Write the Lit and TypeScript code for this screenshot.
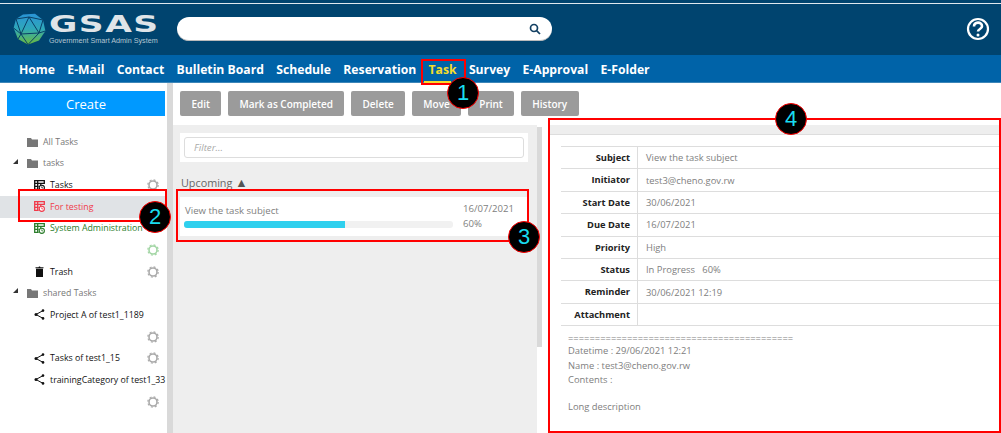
import { LitElement, html, css, svg } from 'lit';
import { customElement } from 'lit/decorators.js';

const NAV = ['Home', 'E-Mail', 'Contact', 'Bulletin Board', 'Schedule', 'Reservation', 'Task', 'Survey', 'E-Approval', 'E-Folder'];
const ACTIONS = ['Edit', 'Mark as Completed', 'Delete', 'Move', 'Print', 'History'];
const DETAILS = [
  ['Subject', 'View the task subject'],
  ['Initiator', 'test3@cheno.gov.rw'],
  ['Start Date', '30/06/2021'],
  ['Due Date', '16/07/2021'],
  ['Priority', 'High'],
  ['Status', 'In Progress \u00a0 60%'],
  ['Reminder', '30/06/2021 12:19'],
  ['Attachment', ''],
];

type Row = { kind: string; label?: string; icon?: string; tone?: string; caret?: boolean; gear?: boolean };

const TREE: Row[] = [
  { kind: 'folder', label: 'All Tasks' },
  { kind: 'folder', label: 'tasks', caret: true },
  { kind: 'leaf', icon: 'table', label: 'Tasks', gear: true },
  { kind: 'leaf', icon: 'table', label: 'For testing', tone: 'red' },
  { kind: 'leaf', icon: 'table', label: 'System Administration', tone: 'green' },
  { kind: 'gear', tone: 'green' },
  { kind: 'leaf', icon: 'trash', label: 'Trash', gear: true },
  { kind: 'folder', label: 'shared Tasks', caret: true },
  { kind: 'leaf', icon: 'share', label: 'Project A of test1_1189' },
  { kind: 'gear' },
  { kind: 'leaf', icon: 'share', label: 'Tasks of test1_15', gear: true },
  { kind: 'leaf', icon: 'share', label: 'trainingCategory of test1_33' },
  { kind: 'gear' },
];

const folderIcon = svg`<svg class="ico-folder" viewBox="0 0 11 10"><path fill="#777" d="M0 1h4l1 1.4h6V10H0z"/></svg>`;
const tableIcon = svg`<svg class="ico" viewBox="0 0 11 11" fill="none" stroke="currentColor"><path stroke-width="1.3" d="M5.5.7H.7v8.6h4M.7 3.4h9.6V.7H5M.7 6.3h4M3.7 1v8"/><path stroke-width="1.3" d="M6.8 3.4v1.5"/><circle cx="7.8" cy="7.8" r="2.6" fill="#fff" stroke-width="1.1"/><path stroke-width=".8" d="M7.8 6.4v1.5h1.2"/></svg>`;
const trashIcon = svg`<svg class="ico" viewBox="0 0 11 11"><path fill="#111" d="M1.5 1.2h3l.5-.8h1l.5.8h3v1h-8zM2 2.8h7V11H2z"/></svg>`;
const shareIcon = svg`<svg class="ico" viewBox="0 0 11 11" fill="#111" stroke="#111"><path stroke-width="1" fill="none" d="M9 1.6 2 5.5 9 9.4"/><circle cx="9" cy="1.6" r="1.3" stroke="none"/><circle cx="2" cy="5.5" r="1.5" stroke="none"/><circle cx="9" cy="9.4" r="1.3" stroke="none"/></svg>`;

@customElement('app-root')
export class AppRoot extends LitElement {
  static styles = css`
    :host {
      display: block;
      position: relative;
      width: 1001px;
      height: 433px;
      overflow: hidden;
      background: #fff;
      font-family: 'Open Sans', sans-serif;
      font-size: 9.4px;
    }
    * { box-sizing: border-box; }
    .top {
      height: 55px;
      background: #00446f;
      border-top: 3px solid #00446f;
      position: relative;
      display: flex;
      align-items: center;
      padding: 0 11px 0 13px;
    }
    .top::before {
      content: '';
      position: absolute;
      left: 0;
      right: 0;
      top: 0;
      height: 1px;
      background: #dfe8ee;
    }
    .logo { display: flex; align-items: center; width: 164px; gap: 3px; flex: none; }
    .logo svg { width: 33px; height: 32px; flex: none; }
    .brand { display: flex; flex-direction: column; }
    .gsas {
      font-family: 'DejaVu Sans', sans-serif;
      font-weight: bold;
      font-size: 23px;
      line-height: 23px;
      color: #dfe4e8;
      transform: scaleX(1.5);
      transform-origin: left;
      letter-spacing: 1px;
      white-space: nowrap;
    }
    .tag {
      font-family: 'Liberation Sans', sans-serif;
      font-size: 7.2px;
      line-height: 9px;
      color: #b5c6d2;
      white-space: nowrap;
    }
    .search {
      width: 375px;
      height: 24px;
      border-radius: 12px;
      background: #fff;
      display: flex;
      align-items: center;
      justify-content: flex-end;
      padding-right: 11px;
      border-bottom: 1px solid #bbb;
    }
    .search svg { width: 12px; height: 12px; }
    .help { margin-left: auto; width: 24px; height: 24px; }
    .nav {
      height: 28px;
      background: #0063a8;
      border-bottom: 1px solid #3d86b8;
      display: flex;
      gap: 12.3px;
      padding: 2px 0 0 19px;
      align-items: center;
      font-weight: 700;
      font-size: 12.2px;
      color: #fff;
    }
    .nav span { position: relative; white-space: nowrap; }
    .nav .on { color: #f4dc2c; }
    .nav .on::after {
      content: '';
      position: absolute;
      left: -5px;
      right: 6px;
      bottom: -5px;
      height: 2px;
      background: #f4dc2c;
    }
    .body { display: flex; height: 350px; }
    .side { width: 167px; flex: none; padding-top: 8px; overflow: hidden; }
    .create {
      margin-left: 7px;
      width: 158px;
      height: 25px;
      background: #0099ff;
      color: #fff;
      font-size: 13px;
      display: flex;
      align-items: center;
      justify-content: center;
    }
    .tree { margin-top: 15px; font-size: 8.8px; font-weight: 500; }
    .row {
      height: 21.65px;
      display: flex;
      align-items: center;
      position: relative;
      white-space: nowrap;
      color: #111;
      width: 167px;
      overflow: hidden;
    }
    .row.folder { padding-left: 27px; color: #777; gap: 5px; }
    .row.leaf { padding-left: 34px; gap: 5px; }
    .row.gearonly { justify-content: flex-end; }
    .row.red { background: #e0e3e6; color: #f03a4a; }
    .row.green { color: #2b7d2b; }
    .ico { width: 11px; height: 11px; flex: none; }
    .ico-folder { width: 11px; height: 10px; flex: none; }
    .caret {
      position: absolute;
      left: 13px;
      top: 6px;
      width: 0;
      height: 0;
      border-left: 5px solid transparent;
      border-bottom: 5px solid #333;
    }
    .gear {
      position: absolute;
      right: 8px;
      top: 5px;
      width: 12px;
      height: 12px;
    }
    .main { flex: 1; border-left: 6px solid #d9d9d9; display: flex; flex-direction: column; min-width: 0; }
    .actions { display: flex; gap: 6.7px; height: 42px; padding: 8px 0 0 7px; }
    .actions span {
      height: 25px;
      padding: 0 11.4px;
      border-radius: 2px;
      background: #9b9b9b;
      color: #fff;
      font-weight: 600;
      font-size: 10px;
      display: flex;
      align-items: center;
    }
    .panes { flex: 1; display: flex; }
    .list {
      width: 364px;
      flex: none;
      background: #eee;
      padding: 8px 9px 0 7px;
    }
    .filter { background: #fff; padding: 4px; height: 29px; }
    .filter div {
      height: 21px;
      border: 1px solid #ddd;
      border-radius: 3px;
      padding-left: 9px;
      line-height: 19px;
      font-size: 9.8px;
      font-style: italic;
      color: #aaa;
    }
    .group { margin-top: 13px; font-size: 10.8px; line-height: 16px; color: #666; padding-left: 1px; }
    .group span { font-size: 12.5px; color: #555; line-height: 14px; }
    .card {
      margin-top: 6px;
      height: 39px;
      background: #fff;
      padding: 5px 15px 0 4px;
      display: flex;
      justify-content: space-between;
      color: #808080;
      font-size: 9.6px;
    }
    .card .left { width: 269px; }
    .card .subject { line-height: 16px; margin-top: 1px; padding-left: 1px; }
    .bar { height: 7px; margin-top: 2px; border-radius: 3px; background: #f1f1f1; overflow: hidden; }
    .bar i { display: block; height: 100%; background: #2fd0ee; }
    .card .right { line-height: 13px; width: 50px; }
    .card .right div + div { line-height: 15px; padding-top: 1px; }
    .scroll { width: 5px; background: #d9d9d9; flex: none; margin-top: 2px; height: 220px; }
    .detail { flex: 1; margin: 0 0 0 6px; min-width: 0; }
    .band { height: 10px; background: #eee; border-bottom: 1px solid #ddd; }
    .table { margin: 11px 0 0 13px; border-top: 1px solid #ddd; }
    .tr { display: flex; height: 22.4px; border-bottom: 1px solid #ddd; align-items: center; }
    .th {
      width: 77px;
      height: 100%;
      padding-right: 7px;
      text-align: right;
      font-weight: 700;
      font-size: 9.3px;
      color: #222;
      line-height: 21px;
      border-right: 1px solid #ddd;
      flex: none;
    }
    .td { padding-left: 8px; color: #808080; }
    .desc { padding: 7px 0 0 20px; color: #808080; line-height: 14.6px; }
    .desc .rule { line-height: 11px; white-space: nowrap; }
    .desc .gap { margin-top: 12px; }
    .mark { position: absolute; border: 2px solid #f00; pointer-events: none; }
    .badge {
      position: absolute;
      width: 32px;
      height: 32px;
      border-radius: 50%;
      background: #000;
      border: 1px solid #f00;
      color: #19dcf0;
      font-family: 'Liberation Sans', sans-serif;
      font-size: 22px;
      line-height: 30px;
      text-align: center;
    }
  `;

  private gear(tone?: string) {
    const c = tone === 'green' ? '#a3d6a5' : '#aaa';
    return html`<svg class="gear" viewBox="0 0 12 12" fill="none" stroke=${c}>
      <circle cx="6" cy="6" r="4" stroke-width="1.6" />
      <circle cx="6" cy="6" r="5.2" stroke-width="1.2" stroke-dasharray="2 2.08" />
    </svg>`;
  }

  private treeRow(r: Row) {
    if (r.kind === 'gear') {
      return html`<div class="row gearonly">${this.gear(r.tone)}</div>`;
    }
    if (r.kind === 'folder') {
      return html`<div class="row folder">
        ${r.caret ? html`<i class="caret"></i>` : ''}${folderIcon}<span>${r.label}</span>
      </div>`;
    }
    const icon = r.icon === 'trash' ? trashIcon : r.icon === 'share' ? shareIcon : tableIcon;
    return html`<div class="row leaf ${r.tone ?? ''}">
      ${icon}<span>${r.label}</span>${r.gear ? this.gear() : ''}
    </div>`;
  }

  render() {
    return html`
      <div class="top">
        <div class="logo">
          <svg viewBox="0 0 33 32">
            <defs>
              <linearGradient id="gem" x1="0" y1="0" x2="0" y2="1">
                <stop offset="0" stop-color="#2a94d6" />
                <stop offset=".5" stop-color="#2fa8b8" />
                <stop offset="1" stop-color="#6cbb3c" />
              </linearGradient>
            </defs>
            <path fill="url(#gem)" d="M10 1.5 22 .8 30 7 32.4 18 26 27.5 15 31.5 5 26 .6 15 3 6z" />
            <path
              fill="none"
              stroke="#0a3f66"
              stroke-width="1"
              d="M3 6 16 4 30 7M16 4 8 21 26 20 16 4M.6 15 8 21 5 26M8 21 15 31.5 26 20 32.4 18M3 6 8 21M30 7 26 20"
            />
          </svg>
          <div class="brand">
            <div class="gsas">GSAS</div>
            <div class="tag">Government Smart Admin System</div>
          </div>
        </div>
        <div class="search">
          <svg viewBox="0 0 12 12" fill="none" stroke="#123f62" stroke-width="1.7">
            <circle cx="5" cy="5" r="3.5" /><path d="M7.6 7.6 11 11" />
          </svg>
        </div>
        <svg class="help" viewBox="0 0 24 24" fill="none" stroke="#fff">
          <circle cx="12" cy="12" r="10" stroke-width="2.2" />
          <path stroke-width="2.6" d="M8 9.6c0-5.2 8-5.2 8-.4 0 3-4 2.6-4 5.4" />
          <circle cx="12" cy="18" r="1.5" fill="#fff" stroke="none" />
        </svg>
      </div>
      <div class="nav">
        ${NAV.map((n) => html`<span class=${n === 'Task' ? 'on' : ''}>${n}</span>`)}
      </div>
      <div class="body">
        <div class="side">
          <div class="create">Create</div>
          <div class="tree">${TREE.map((r) => this.treeRow(r))}</div>
        </div>
        <div class="main">
          <div class="actions">${ACTIONS.map((a) => html`<span>${a}</span>`)}</div>
          <div class="panes">
            <div class="list">
              <div class="filter"><div>Filter...</div></div>
              <div class="group">Upcoming <span>▲</span></div>
              <div class="card">
                <div class="left">
                  <div class="subject">View the task subject</div>
                  <div class="bar"><i style="width: 60%"></i></div>
                </div>
                <div class="right"><div>16/07/2021</div><div>60%</div></div>
              </div>
            </div>
            <div class="scroll"></div>
            <div class="detail">
              <div class="band"></div>
              <div class="table">
                ${DETAILS.map(
                  ([k, v]) => html`<div class="tr"><div class="th">${k}</div><div class="td">${v}</div></div>`
                )}
              </div>
              <div class="desc">
                <div class="rule">${'='.repeat(42)}</div>
                <div>Datetime : 29/06/2021 12:21</div>
                <div>Name : test3@cheno.gov.rw</div>
                <div>Contents :</div>
                <div class="gap">Long description</div>
              </div>
            </div>
          </div>
        </div>
      </div>
      <div class="mark" style="left:421px;top:59px;width:45px;height:26px"></div>
      <div class="mark" style="left:18px;top:189px;width:149px;height:33px"></div>
      <div class="mark" style="left:176px;top:189px;width:353px;height:53px"></div>
      <div class="mark" style="left:548px;top:118px;width:453px;height:315px"></div>
      <div class="badge" style="left:447px;top:77px">1</div>
      <div class="badge" style="left:139px;top:201px">2</div>
      <div class="badge" style="left:508px;top:221px">3</div>
      <div class="badge" style="left:775px;top:103px">4</div>
    `;
  }
}
